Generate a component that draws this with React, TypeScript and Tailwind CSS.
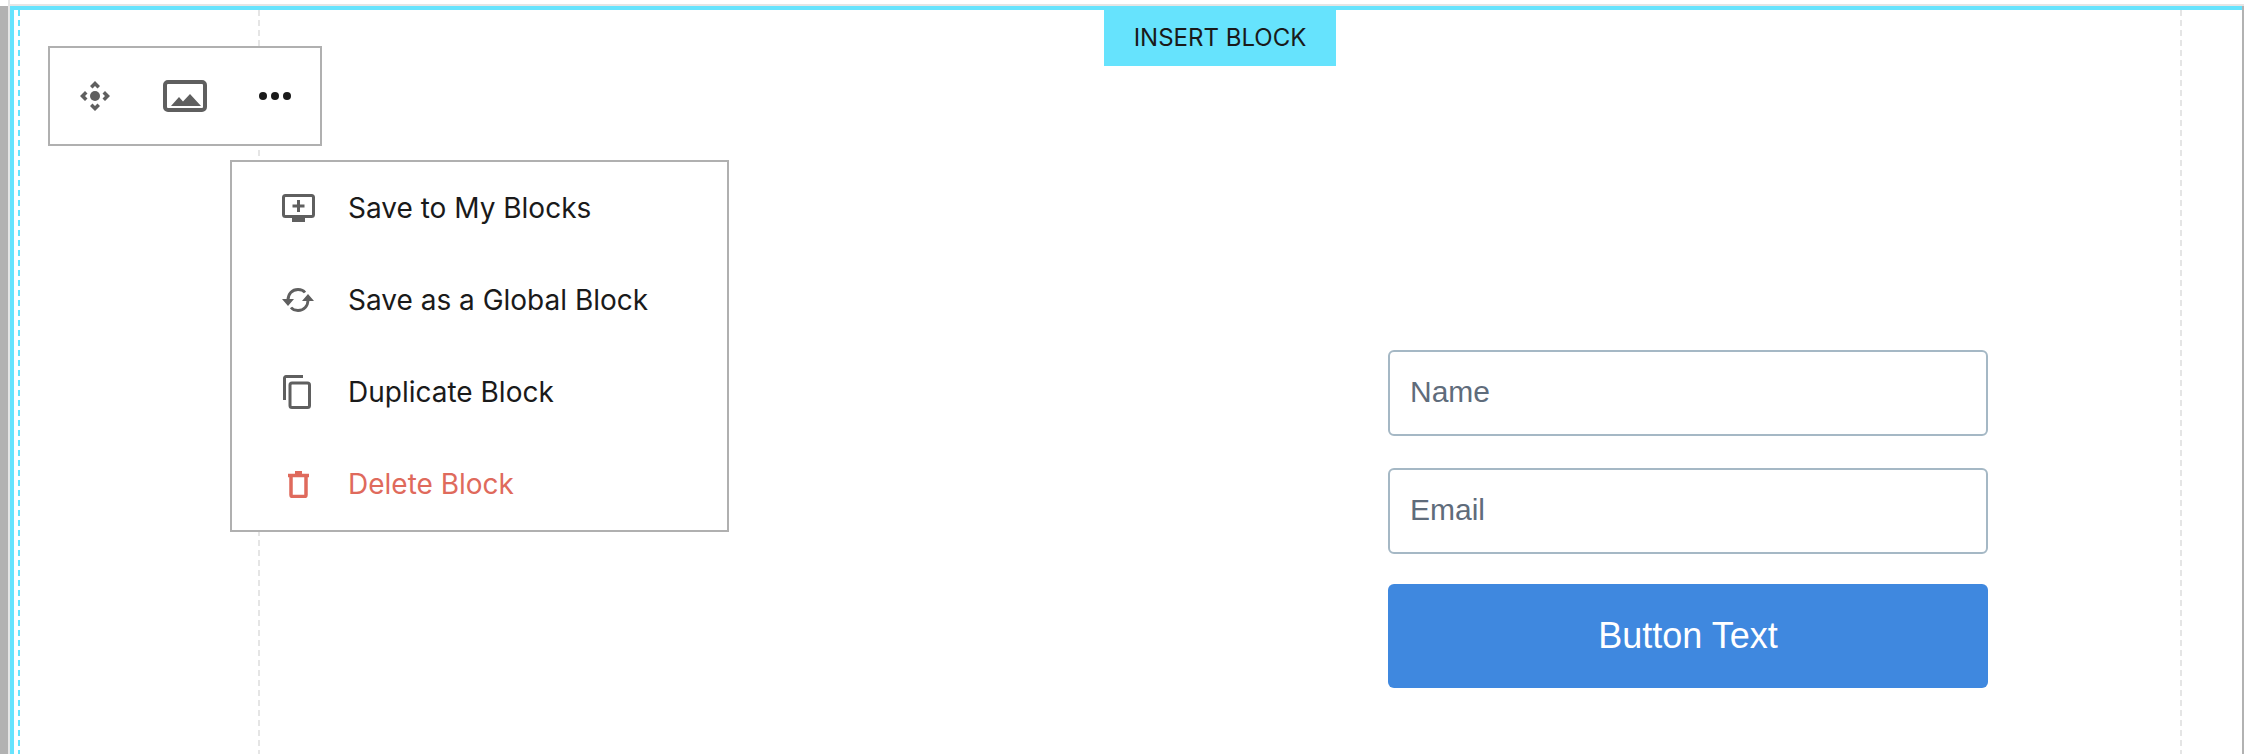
const menuItems = [
  { label: 'Save to My Blocks', icon: <MonitorPlusIcon /> },
  { label: 'Save as a Global Block', icon: <SyncIcon /> },
  { label: 'Duplicate Block', icon: <CopyIcon /> },
  { label: 'Delete Block', icon: <TrashIcon />, danger: true },
]

function MoveIcon() {
  return (
    <svg width="30" height="30" viewBox="0 0 30 30" fill="#5f5f5f">
      <circle cx="15" cy="15" r="5" />
      <path d="M15 0l5 5-2.500 2.500L15 5l-2.500 2.500L10 5zM15 30l5-5-2.500-2.500L15 25l-2.500-2.500L10 25zM0 15l5-5 2.500 2.500L5 15l2.500 2.500L5 20zM30 15l-5-5-2.500 2.500L25 15l-2.500 2.500L25 20z" />
    </svg>
  )
}

function ImageIcon() {
  return (
    <svg width="44" height="32" viewBox="0 0 44 32" fill="#5f5f5f">
      <rect x="2" y="2" width="40" height="28" rx="3" fill="none" stroke="#5f5f5f" strokeWidth="4" />
      <path d="M8 26l8-9 4 4.500 7-7.500 11 12z" />
    </svg>
  )
}

function DotsIcon() {
  return (
    <svg width="32" height="8" viewBox="0 0 32 8" fill="#1a1a1a">
      <circle cx="4" cy="4" r="4" />
      <circle cx="16" cy="4" r="4" />
      <circle cx="28" cy="4" r="4" />
    </svg>
  )
}

function MonitorPlusIcon() {
  return (
    <svg width="33" height="28" viewBox="0 0 33 28" fill="#5f5f5f">
      <rect x="1.500" y="1.500" width="30" height="21" rx="2" fill="none" stroke="#5f5f5f" strokeWidth="3" />
      <path d="M10 22h13v6H10z" />
      <path d="M15 6h3v4.500h4.500v3H18V18h-3v-4.500h-4.500v-3H15z" />
    </svg>
  )
}

function SyncIcon() {
  return (
    <svg width="32" height="24" viewBox="0 0 32 24" fill="none" stroke="#5f5f5f" strokeWidth="2.800">
      <path d="M6 12c0-6 4-10.500 10-10.500 3 0 5.500 1 7 3" />
      <path d="M26 12c0 6-4 10.500-10 10.500-3 0-5.500-1-7-3" />
      <path d="M0 11h12l-6 7zM32 13H20l6-7z" fill="#5f5f5f" stroke="none" />
    </svg>
  )
}

function CopyIcon() {
  return (
    <svg className="-ml-0.5" width="28" height="34" viewBox="0 0 28 34" fill="none" stroke="#5f5f5f" strokeWidth="3">
      <path d="M1.500 25V3a1.500 1.500 0 0 1 1.500-1.500h17" />
      <rect x="7" y="8" width="19.500" height="24.500" rx="2" />
    </svg>
  )
}

function TrashIcon() {
  return (
    <svg width="21" height="27" viewBox="0 0 21 27" fill="none" stroke="#df6a5c" strokeWidth="3.500">
      <path d="M0 4.500h21" />
      <path d="M7 1.500h7" />
      <path d="M3 6v18a1.500 1.500 0 0 0 1.500 1.500h12A1.500 1.500 0 0 0 18 24V6" />
    </svg>
  )
}

export default function App() {
  return (
    <div className="flex h-[754px] overflow-hidden bg-white font-['Inter',sans-serif]">
      <div className="w-2 pt-1.5">
        <div className="h-full bg-[#b2b2b2]" />
      </div>
      <div className="w-0.5 bg-[#e5e5e5]" />
      <div className="flex flex-1 flex-col pt-1">
        <div className="h-0.5 bg-[#e5e5e5]" />
        <div className="flex flex-1">
          <main className="relative flex flex-1 justify-end border-t-4 border-l-4 border-[#66e3fd] pt-[340px] pr-[254px]">
            <div className="absolute top-0 left-1 h-full w-0.5 bg-[repeating-linear-gradient(to_bottom,#66e3fd_0,#66e3fd_6px,transparent_6px,transparent_10px)]" />
            <div className="absolute top-0 left-[244px] h-full w-0.5 bg-[repeating-linear-gradient(to_bottom,#e5e5e5_0,#e5e5e5_6px,transparent_6px,transparent_10px)]" />
            <div className="absolute top-0 left-[2166px] h-full w-0.5 bg-[repeating-linear-gradient(to_bottom,#e5e5e5_0,#e5e5e5_6px,transparent_6px,transparent_10px)]" />

            <div className="absolute top-0 left-[1090px] flex h-14 w-[232px] items-center justify-center bg-[#66e3fd] text-2xl text-[#1a1a1a]">
              INSERT BLOCK
            </div>

            <div className="absolute top-9 left-[34px] flex h-[100px] w-[274px] items-center border-2 border-[#b0b0b0] bg-white pl-[30px]">
              <MoveIcon />
              <span className="ml-[53px]"><ImageIcon /></span>
              <span className="ml-[52px]"><DotsIcon /></span>
            </div>

            <div className="absolute top-[150px] left-[216px] w-[499px] border-2 border-[#b0b0b0] bg-white">
              {menuItems.map(({ label, icon, danger }) => (
                <div key={label} className={`flex h-[92px] items-center text-[28px] ${danger ? 'text-[#df6a5c]' : 'text-[#1a1a1a]'}`}>
                  <span className="flex w-[116px] justify-center pl-4">{icon}</span>
                  <span>{label}</span>
                </div>
              ))}
            </div>

            <form className="flex w-[600px] flex-col font-['Liberation_Sans',sans-serif]">
              <input
                placeholder="Name"
                className="h-[86px] rounded-md border-2 border-[#a5b8c5] px-5 pb-0.5 text-3xl placeholder:text-[#5f6c7b]"
              />
              <input
                placeholder="Email"
                className="mt-8 h-[86px] rounded-md border-2 border-[#a5b8c5] px-5 pb-0.5 text-3xl placeholder:text-[#5f6c7b]"
              />
              <button type="button" className="mt-[30px] h-[104px] rounded-md bg-[#3f88df] text-4xl text-white">
                Button Text
              </button>
            </form>
          </main>
          <div className="w-0.5 bg-[#b2b2b2]" />
        </div>
      </div>
    </div>
  )
}
